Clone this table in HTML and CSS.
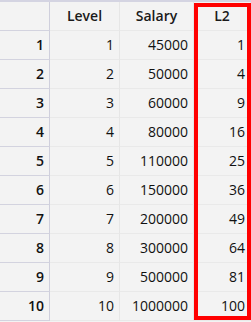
FILE: index.html
```html
<!DOCTYPE html>
<html>
<head>
<meta charset="utf-8">
<link rel="stylesheet" href="styles.css">
</head>
<body>
<div class="view">
  <div class="grid">
    <div class="cell idx head"></div>
    <div class="cell head">Level</div>
    <div class="cell head">Salary</div>
    <div class="cell head">L2</div>

    <div class="cell idx">1</div><div class="cell">1</div><div class="cell">45000</div><div class="cell">1</div>
    <div class="cell idx">2</div><div class="cell">2</div><div class="cell">50000</div><div class="cell">4</div>
    <div class="cell idx">3</div><div class="cell">3</div><div class="cell">60000</div><div class="cell">9</div>
    <div class="cell idx">4</div><div class="cell">4</div><div class="cell">80000</div><div class="cell">16</div>
    <div class="cell idx">5</div><div class="cell">5</div><div class="cell">110000</div><div class="cell">25</div>
    <div class="cell idx">6</div><div class="cell">6</div><div class="cell">150000</div><div class="cell">36</div>
    <div class="cell idx">7</div><div class="cell">7</div><div class="cell">200000</div><div class="cell">49</div>
    <div class="cell idx">8</div><div class="cell">8</div><div class="cell">300000</div><div class="cell">64</div>
    <div class="cell idx">9</div><div class="cell">9</div><div class="cell">500000</div><div class="cell">81</div>
    <div class="cell idx">10</div><div class="cell">10</div><div class="cell">1000000</div><div class="cell">100</div>
  </div>
  <div class="highlight"></div>
</div>
</body>
</html>
```

FILE: styles.css
```css
html, body {
  margin: 0;
  padding: 0;
  background: #f3f3f3;
}
.view {
  position: relative;
  width: 251px;
  height: 322px;
  overflow: hidden;
  border-top: 2px solid #d4d4e2;
  box-sizing: border-box;
  font-family: "Open Sans", "Noto Sans", sans-serif;
  font-size: 14px;
  color: #111111;
}
.grid {
  display: grid;
  grid-template-columns: 50px 70px 74px 57px;
  grid-template-rows: 29px repeat(10, 29px);
}
.cell {
  display: flex;
  align-items: center;
  justify-content: flex-end;
  padding-right: 5px;
  border-right: 1px solid #e6e6e6;
  border-bottom: 1px solid #e9e9e9;
  box-sizing: border-box;
  line-height: 1;
}
.cell.head {
  justify-content: center;
  padding-right: 0;
  font-weight: 600;
  color: #1a1a1a;
}
.cell.idx {
  font-weight: 600;
  border-right: 1px solid #cfcfdc;
  border-bottom: 1px solid #d3d3df;
}
.highlight {
  position: absolute;
  left: 194px;
  top: 1px;
  width: 57px;
  height: 317px;
  border: 4px solid #ff0000;
  box-sizing: border-box;
}
```
